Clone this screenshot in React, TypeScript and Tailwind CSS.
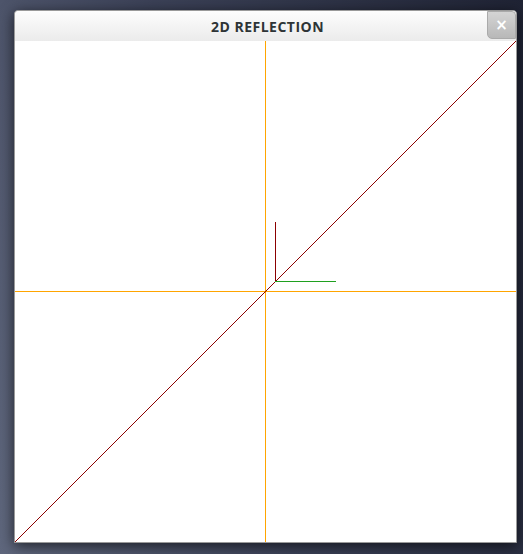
export default function App() {
  return (
    <div className="h-[554px] w-[523px] overflow-hidden bg-[linear-gradient(75deg,#5f677d_0%,#3b4157_45%,#1f2334_100%)] pl-[14px] pt-[10px]">
      <div className="w-[503px] rounded-t-[4px] border border-[#9a9a9a] bg-white shadow-[0_3px_14px_rgba(0,0,0,0.65)]">
        {/* Title bar */}
        <div className="relative flex h-[30px] items-center justify-center rounded-t-[4px] bg-[linear-gradient(#fdfdfd,#ebebeb)]">
          <span className="pl-[4px] font-['Open_Sans','DejaVu_Sans',sans-serif] text-[14px] font-bold tracking-[0.5px] text-[#2e3436]">
            2D REFLECTION
          </span>
          <button className="absolute right-0 top-0 flex h-[28px] w-[29px] items-center justify-center rounded-bl-[5px] rounded-tr-[4px] border border-[#aaaaaa] bg-[linear-gradient(#d4d4d4,#b8b8b8)] font-['DejaVu_Sans',sans-serif] text-[15px] font-bold leading-none text-white">
            ×
          </button>
        </div>

        {/* Canvas */}
        <svg width="501" height="501" viewBox="0 0 501 501" className="block" shapeRendering="crispEdges">
          <line x1="250.5" y1="0" x2="250.5" y2="501" stroke="#ffa500" strokeWidth="1" />
          <line x1="0" y1="250.5" x2="501" y2="250.5" stroke="#ffa500" strokeWidth="1" />
          <line x1="0" y1="501" x2="501" y2="0" stroke="#8b0000" strokeWidth="1" />
          <line x1="260.5" y1="181" x2="260.5" y2="240" stroke="#8b0000" strokeWidth="1" />
          <line x1="260" y1="240.5" x2="321" y2="240.5" stroke="#1fa01f" strokeWidth="1" />
        </svg>
      </div>
    </div>
  );
}
